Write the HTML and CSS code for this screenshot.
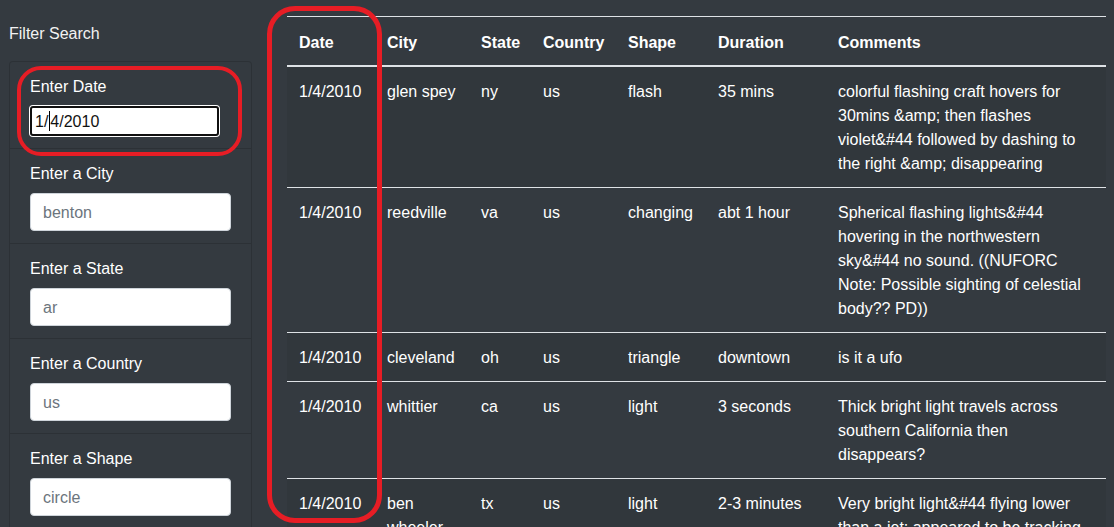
FILE: index.html
```html
<!DOCTYPE html>
<html lang="en">
<head>
<meta charset="utf-8">
<title>UFO Sightings</title>
<link rel="stylesheet" href="styles.css">
</head>
<body>
<div class="page">
  <aside class="sidebar">
    <div class="sidebar-title">Filter Search</div>
    <ul class="filters">
      <li class="filter">
        <label class="filter-label">Enter Date</label>
        <div class="field-focused" role="textbox">1/<span class="caret"></span>4/2010</div>
      </li>
      <li class="filter">
        <label class="filter-label" for="city">Enter a City</label>
        <input class="field" id="city" type="text" placeholder="benton">
      </li>
      <li class="filter">
        <label class="filter-label" for="state">Enter a State</label>
        <input class="field" id="state" type="text" placeholder="ar">
      </li>
      <li class="filter">
        <label class="filter-label" for="country">Enter a Country</label>
        <input class="field" id="country" type="text" placeholder="us">
      </li>
      <li class="filter">
        <label class="filter-label" for="shape">Enter a Shape</label>
        <input class="field" id="shape" type="text" placeholder="circle">
      </li>
    </ul>
  </aside>
  <main class="main">
    <table class="ufo-table">
      <colgroup>
        <col class="c-date"><col class="c-city"><col class="c-state"><col class="c-country"><col class="c-shape"><col class="c-duration"><col class="c-comments">
      </colgroup>
      <thead>
        <tr><th>Date</th><th>City</th><th>State</th><th>Country</th><th>Shape</th><th>Duration</th><th>Comments</th></tr>
      </thead>
      <tbody>
        <tr><td>1/4/2010</td><td>glen spey</td><td>ny</td><td>us</td><td>flash</td><td>35 mins</td><td>colorful flashing craft hovers for 30mins &amp;amp; then flashes violet&amp;#44 followed by dashing to the right &amp;amp; disappearing</td></tr>
        <tr><td>1/4/2010</td><td>reedville</td><td>va</td><td>us</td><td>changing</td><td>abt 1 hour</td><td>Spherical flashing lights&amp;#44 hovering in the northwestern sky&amp;#44 no sound. ((NUFORC Note: Possible sighting of celestial body?? PD))</td></tr>
        <tr><td>1/4/2010</td><td>cleveland</td><td>oh</td><td>us</td><td>triangle</td><td>downtown</td><td>is it a ufo</td></tr>
        <tr><td>1/4/2010</td><td>whittier</td><td>ca</td><td>us</td><td>light</td><td>3 seconds</td><td>Thick bright light travels across southern California then disappears?</td></tr>
        <tr><td>1/4/2010</td><td>ben wheeler</td><td>tx</td><td>us</td><td>light</td><td>2-3 minutes</td><td>Very bright light&amp;#44 flying lower than a jet; appeared to be tracking something</td></tr>
      </tbody>
    </table>
  </main>
</div>
<div class="mark mark-date-filter"></div>
<div class="mark mark-date-column"></div>
</body>
</html>
```
FILE: styles.css
```css
html, body {
  margin: 0;
  padding: 0;
  height: 100%;
  overflow: hidden;
}
body {
  background: #343a40;
  color: #ffffff;
  font-family: "Liberation Sans", Arial, sans-serif;
  font-size: 16px;
  line-height: 24px;
  position: relative;
}
.page {
  display: flex;
  align-items: flex-start;
}
.sidebar {
  width: 243px;
  padding: 22px 0 0 9px;
  flex: none;
}
.sidebar-title {
  height: 24px;
  margin-bottom: 15px;
  color: #f2f2f2;
}
.filters {
  list-style: none;
  margin: 0;
  padding: 0;
  border: 1px solid rgba(0, 0, 0, 0.15);
  border-radius: 4px 4px 0 0;
  border-bottom: none;
}
.filter {
  padding: 13px 20px 12px;
  border-bottom: 1px solid rgba(0, 0, 0, 0.15);
}
.filter-label {
  display: block;
  margin-bottom: 7px;
  color: #ffffff;
}
.field {
  display: block;
  box-sizing: border-box;
  width: 201px;
  height: 38px;
  padding: 7px 12px 5px;
  border: 1px solid #ced4da;
  border-radius: 4px;
  background: #ffffff;
  font-family: inherit;
  font-size: 16px;
  color: #495057;
  outline: none;
}
.field::placeholder {
  color: #6c757d;
}
.field-focused {
  box-sizing: border-box;
  width: 189px;
  height: 30px;
  padding: 1px 3px;
  border: 2px solid #101010;
  border-radius: 3px;
  background: #ffffff;
  box-shadow: 0 0 0 1px #ffffff;
  color: #111111;
  line-height: 25px;
  white-space: nowrap;
}
.caret {
  display: inline-block;
  width: 0;
  height: 20px;
  border-left: 1px solid #000;
  vertical-align: -4px;
  margin: 0 0 0 1px;
}
.main {
  margin-left: 35px;
  padding-top: 16px;
  width: 819px;
  flex: none;
}
.ufo-table {
  width: 819px;
  table-layout: fixed;
  border-collapse: collapse;
  color: #ffffff;
}
.c-date { width: 88px; }
.c-city { width: 94px; }
.c-state { width: 62px; }
.c-country { width: 85px; }
.c-shape { width: 90px; }
.c-duration { width: 120px; }
.c-comments { width: 280px; }
.ufo-table th,
.ufo-table td {
  padding: 13px 12px 11px;
  text-align: left;
  vertical-align: top;
  border-top: 1px solid #dee2e6;
}
.ufo-table th {
  font-weight: bold;
  padding-top: 14px;
  padding-bottom: 10px;
  border-bottom: 2px solid #dee2e6;
}
.ufo-table tbody tr:nth-child(odd) {
  background: rgba(0, 0, 0, 0.05);
}
.ufo-table tbody tr:first-child td {
  border-top: none;
}
.mark {
  position: absolute;
  box-sizing: border-box;
  border: 5px solid #e71d25;
  pointer-events: none;
}
.mark-date-filter {
  left: 17px;
  top: 66px;
  width: 225px;
  height: 90px;
  border-width: 4px;
  border-radius: 24px;
}
.mark-date-column {
  left: 267px;
  top: 6px;
  width: 115px;
  height: 517px;
  border-radius: 28px;
}
```
